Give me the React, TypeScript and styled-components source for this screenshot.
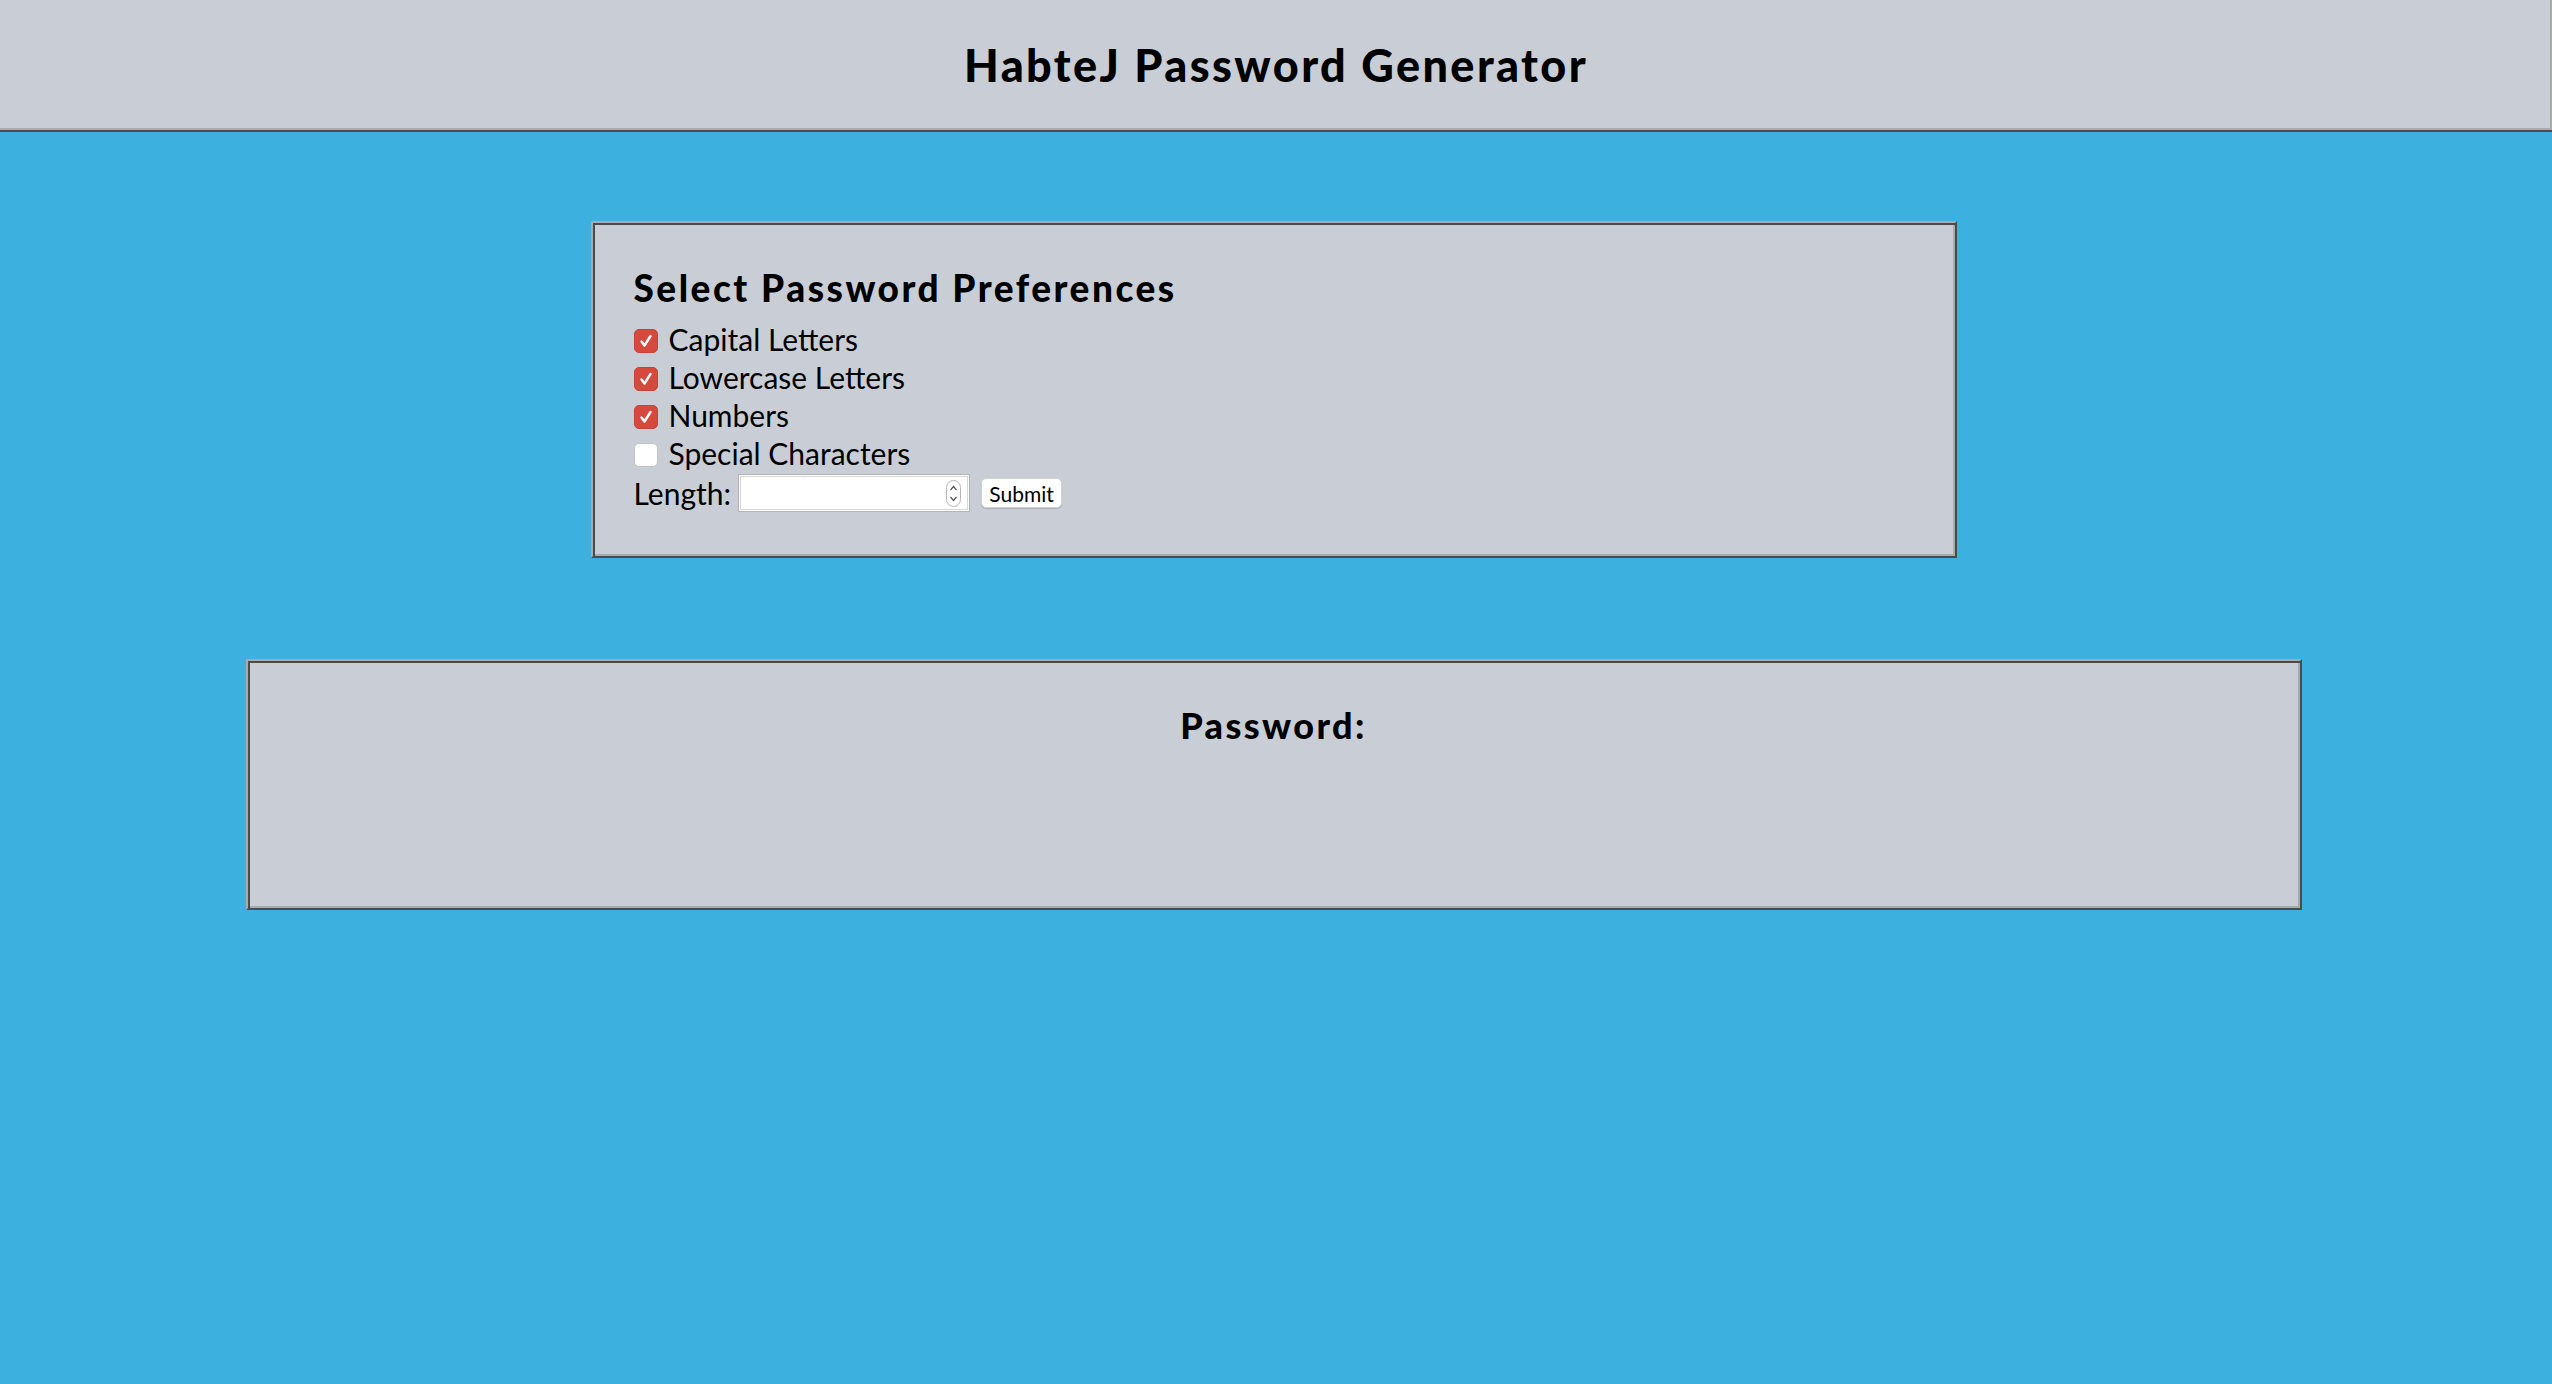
import styled, { createGlobalStyle } from "styled-components";
import { useState } from "react";

const GlobalStyle = createGlobalStyle`
  html, body {
    margin: 0;
    padding: 0;
    background: #3cb0df;
    font-family: Lato, "Open Sans", sans-serif;
    color: #000;
  }
`;

const LIGHT = "#aaaaaa";
const DARK = "#4b4b4b";

const Header = styled.header`
  height: 130px;
  display: flex;
  align-items: center;
  justify-content: center;
  background: #c9ced6;
  border-bottom: 2px solid ${DARK};
  box-shadow: inset 0 -2px 0 ${LIGHT}, inset -2px 0 0 ${LIGHT};
`;

const Title = styled.h1`
  margin: 0;
  font-size: 45px;
  font-weight: 900;
  letter-spacing: 2.4px;
  line-height: 1.2;
`;

const Panel = styled.section<{ $width: number; $height?: number }>`
  box-sizing: border-box;
  width: ${(p) => p.$width}px;
  ${(p) => (p.$height ? `height: ${p.$height}px;` : "")}
  margin: 0 auto;
  background: #c9ced6;
  border: 2px solid;
  border-color: ${LIGHT} ${DARK} ${DARK} ${LIGHT};
  box-shadow: inset 2px 2px 0 ${DARK}, inset -2px -2px 0 ${LIGHT};
`;

const Main = styled.main`
  display: flex;
  flex-direction: column;
  padding: 89px 5px 0 0;
  gap: 101px;
`;

const FormPanel = styled(Panel)`
  padding: 43px 41px 42px;
`;

const Heading = styled.h2`
  margin: 0 0 10px;
  font-size: 37px;
  font-weight: 900;
  letter-spacing: 2.5px;
  line-height: 1.2;
`;

const Row = styled.label`
  display: flex;
  align-items: center;
  height: 38px;
  font-size: 30px;
  cursor: pointer;
`;

const Box = styled.span<{ $checked: boolean }>`
  box-sizing: border-box;
  width: 24px;
  height: 24px;
  margin: 4px 11px 0 0;
  border-radius: 5px;
  display: flex;
  align-items: center;
  justify-content: center;
  background: ${(p) => (p.$checked ? "#d64a3e" : "#ffffff")};
  border: 1px solid ${(p) => (p.$checked ? "#c4433a" : "#c4c4c4")};
`;

const LengthRow = styled.div`
  display: flex;
  align-items: center;
  height: 42px;
  font-size: 30px;
`;

const InputBox = styled.div`
  box-sizing: border-box;
  width: 232px;
  height: 38px;
  margin: 0 11px 0 7px;
  display: flex;
  align-items: center;
  background: #fff;
  border: 1px solid #b3b3b3;
  box-shadow: inset 0 0 0 1px #fff, inset 0 0 0 2px #d6d6d6;
  padding-right: 8px;
`;

const NumberInput = styled.input`
  flex: 1;
  min-width: 0;
  border: none;
  outline: none;
  background: transparent;
  font-family: inherit;
  font-size: 20px;
  padding: 0 6px;
`;

const Submit = styled.button`
  box-sizing: border-box;
  width: 81px;
  height: 30px;
  background: #fff;
  border: 1px solid #d0d0d0;
  border-radius: 5px;
  box-shadow: 0 1px 1px rgba(0, 0, 0, 0.15);
  font-family: inherit;
  font-size: 21px;
  padding: 0;
  color: #000;
  cursor: pointer;
`;

const PasswordPanel = styled(Panel)`
  padding-top: 43px;
  text-align: center;
`;

const PasswordHeading = styled.h2`
  margin: 0;
  font-size: 36px;
  font-weight: 900;
  letter-spacing: 2.4px;
  line-height: 1.2;
`;

function Check() {
  return (
    <svg width="16" height="16" viewBox="0 0 16 16">
      <path
        d="M3.5 8.5 L6.5 12.5 L12.5 3"
        fill="none"
        stroke="#fff"
        strokeWidth="2.4"
        strokeLinecap="round"
        strokeLinejoin="round"
      />
    </svg>
  );
}

function Spinner() {
  return (
    <svg width="15" height="27" viewBox="0 0 15 27">
      <rect x="0.5" y="0.5" width="14" height="26" rx="7" fill="#fff" stroke="#b5b5b5" />
      <path d="M4.5 10 L7.5 6.5 L10.5 10" fill="none" stroke="#555" strokeWidth="1.2" />
      <path d="M4.5 17 L7.5 20.5 L10.5 17" fill="none" stroke="#555" strokeWidth="1.2" />
    </svg>
  );
}

const options = [
  "Capital Letters",
  "Lowercase Letters",
  "Numbers",
  "Special Characters",
];

export default function App() {
  const [checked, setChecked] = useState([true, true, true, false]);
  const [length, setLength] = useState("");

  return (
    <>
      <GlobalStyle />
      <Header>
        <Title>HabteJ Password Generator</Title>
      </Header>
      <Main>
        <FormPanel $width={1366}>
          <Heading>Select Password Preferences</Heading>
          {options.map((opt, i) => (
            <Row
              key={opt}
              onClick={() =>
                setChecked((c) => c.map((v, j) => (j === i ? !v : v)))
              }
            >
              <Box $checked={checked[i]}>{checked[i] && <Check />}</Box>
              {opt}
            </Row>
          ))}
          <LengthRow>
            Length:
            <InputBox>
              <NumberInput
                type="text"
                value={length}
                onChange={(e) => setLength(e.target.value)}
              />
              <Spinner />
            </InputBox>
            <Submit>Submit</Submit>
          </LengthRow>
        </FormPanel>
        <PasswordPanel $width={2056} $height={251}>
          <PasswordHeading>Password:</PasswordHeading>
        </PasswordPanel>
      </Main>
    </>
  );
}
